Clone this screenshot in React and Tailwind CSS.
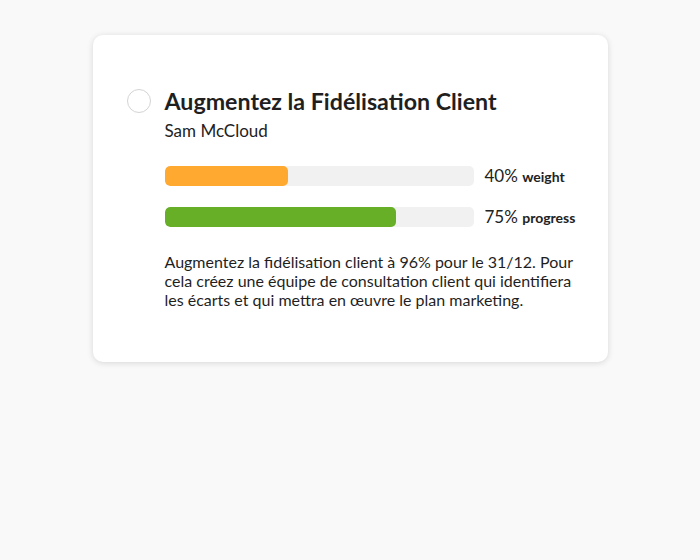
export default function App() {
    return (
        <div className="min-h-[560px] bg-[#f9f9f9] pt-[35px] font-['Lato',sans-serif] text-[#1f1f1f]">
            <div className="mx-auto w-[515px] rounded-[10px] bg-white pb-[53px] pl-[34px] pr-[26px] pt-[52px] shadow-[0_1px_6px_rgba(0,0,0,0.14)]">
                <div className="flex gap-[14px]">
                    <div className="mt-[2px] h-[24px] w-[24px] shrink-0 rounded-full border border-[#d4d4d4] bg-white" />
                    <div className="min-w-0 flex-1">
                        <h2 className="text-[23.2px] font-bold leading-[28px] text-[#1f1f1f]">Augmentez la Fidélisation Client</h2>
                        <p className="mt-[5px] text-[17px] leading-[22px] text-[#222]">Sam McCloud</p>

                        <div className="mt-[24px] space-y-[21px]">
                            <div className="flex h-[20px] items-center gap-[11px]">
                                <div className="h-[20px] w-[309px] shrink-0 overflow-hidden rounded-[5px] bg-[#f1f1f1]">
                                    <div className="h-full rounded-[5px] bg-[#ffa931]" style={{ width: "40%" }} />
                                </div>
                                <span className="whitespace-nowrap text-[17px] leading-[20px] text-[#222]">
                                    40% <span className="text-[14px] font-bold">weight</span>
                                </span>
                            </div>
                            <div className="flex h-[20px] items-center gap-[11px]">
                                <div className="h-[20px] w-[309px] shrink-0 overflow-hidden rounded-[5px] bg-[#f1f1f1]">
                                    <div className="h-full rounded-[5px] bg-[#68af28]" style={{ width: "75%" }} />
                                </div>
                                <span className="whitespace-nowrap text-[17px] leading-[20px] text-[#222]">
                                    75% <span className="text-[14px] font-bold">progress</span>
                                </span>
                            </div>
                        </div>

                        <p className="mt-[25px] text-[16px] leading-[19px] text-[#1f1f1f]">
                            Augmentez la fidélisation client à 96% pour le 31/12. Pour cela créez une équipe de consultation client qui identifiera les écarts et qui mettra en œuvre le plan marketing.
                        </p>
                    </div>
                </div>
            </div>
        </div>
    );
}
